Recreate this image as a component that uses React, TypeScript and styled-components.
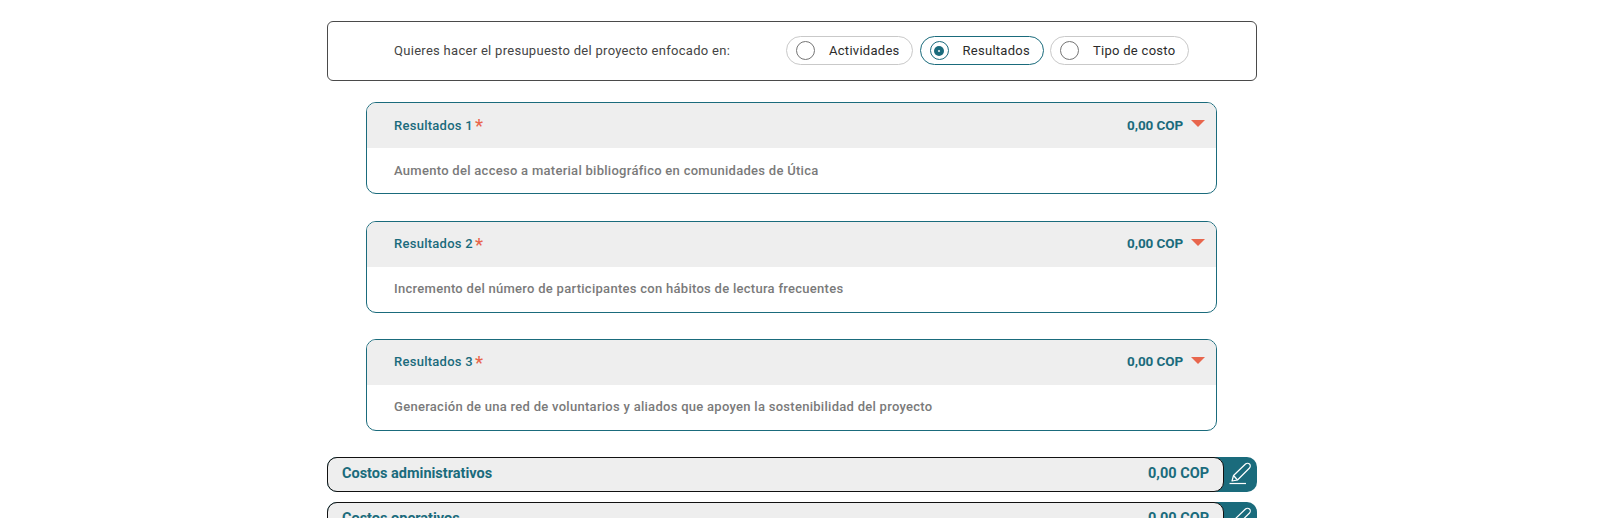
import React from "react";
import styled, { createGlobalStyle } from "styled-components";

const teal = "#1a6b7c";

const GlobalStyle = createGlobalStyle`
  html, body {
    margin: 0;
    padding: 0;
    height: 100%;
    overflow: hidden;
    background: #ffffff;
    font-family: Roboto, "Liberation Sans", sans-serif;
  }
`;

const Page = styled.div`
  width: 930px;
  margin-left: 327px;
  padding-top: 21px;
`;

const FocusBox = styled.div`
  box-sizing: border-box;
  height: 60px;
  border: 1px solid #4a4a4a;
  border-radius: 6px;
  display: flex;
  align-items: center;
  padding: 0 0 1px 66px;
  margin-bottom: 21.3px;
`;

const FocusLabel = styled.span`
  width: 392px;
  font-size: 13px;
  letter-spacing: 0.29px;
  color: #444444;
`;

const RadioGroup = styled.div`
  display: flex;
  gap: 6.5px;
`;

const RadioPill = styled.label<{ $active?: boolean; $width: number }>`
  box-sizing: border-box;
  width: ${(p) => p.$width}px;
  height: 29px;
  border: 1px solid ${(p) => (p.$active ? teal : "#c9c9c9")};
  border-radius: 15px;
  display: flex;
  align-items: center;
  padding-left: 9px;
  gap: 14px;
  font-size: 13px;
  letter-spacing: 0.28px;
  color: #2b2b2b;
`;

const RadioCircle = styled.span<{ $active?: boolean }>`
  box-sizing: border-box;
  width: 19px;
  height: 19px;
  border-radius: 50%;
  border: ${(p) => (p.$active ? `1.5px solid ${teal}` : "1px solid #757575")};
  display: flex;
  align-items: center;
  justify-content: center;
  &::after {
    content: "";
    display: ${(p) => (p.$active ? "block" : "none")};
    width: 10px;
    height: 10px;
    border-radius: 50%;
    background: radial-gradient(circle, #b9d3d9 0 0.8px, ${teal} 1.6px);
  }
`;

const ResultList = styled.div`
  display: flex;
  flex-direction: column;
  gap: 26.3px;
  margin: 0 40px 26px 39px;
`;

const ResultCard = styled.section`
  box-sizing: border-box;
  height: 92px;
  border: 1px solid ${teal};
  border-radius: 10px;
  overflow: hidden;
`;

const ResultHeader = styled.header`
  box-sizing: border-box;
  height: 45px;
  background: #eeeeee;
  display: flex;
  align-items: center;
  justify-content: space-between;
  padding: 0 11px 1px 27px;
  color: ${teal};
  font-size: 13px;
  font-weight: 500;
  letter-spacing: 0.27px;
`;

const ResultTitle = styled.span`
  display: flex;
  align-items: center;
  gap: 2px;
`;

const Required = styled.span`
  color: #e8664d;
  font-size: 18px;
  font-weight: 500;
  line-height: 1;
  margin-top: 2px;
`;

const Amount = styled.span`
  display: flex;
  align-items: center;
  gap: 8px;
  font-size: 13.5px;
  line-height: 15px;
  font-weight: 700;
  letter-spacing: -0.1px;
`;

const Caret = styled.span`
  width: 0;
  height: 0;
  border-left: 7px solid transparent;
  border-right: 7px solid transparent;
  border-top: 7px solid #e8664d;
  margin-top: -3px;
`;

const ResultBody = styled.p`
  margin: 0;
  padding: 14.5px 27px 0;
  font-size: 13px;
  font-weight: 500;
  line-height: 16px;
  letter-spacing: 0.28px;
  color: #7a7a7a;
`;

const CostList = styled.div`
  display: flex;
  flex-direction: column;
  gap: 10px;
`;

const CostRow = styled.div`
  display: flex;
  height: 35px;
  background: ${teal};
  border-radius: 10px;
`;

const CostBar = styled.div`
  box-sizing: border-box;
  flex: 1;
  display: flex;
  align-items: center;
  justify-content: space-between;
  padding: 0 14px 1px 14px;
  background: #eeeeee;
  border: 1px solid #111111;
  border-radius: 10px;
  color: ${teal};
  font-size: 14.5px;
  font-weight: 700;
`;

const EditButton = styled.button`
  width: 33px;
  padding: 0;
  border: 0;
  background: transparent;
  display: flex;
  align-items: center;
  justify-content: center;
`;

const PencilIcon = () => (
  <svg width="24" height="24" viewBox="0 0 24 24" fill="none" stroke="#ffffff" strokeWidth="1.2">
    <path
      d="M3 19 L4.5 13.5 L16.5 2 C17.5 1 19.5 1 20.5 2 C21.5 3 21.5 5 20.5 6 L8.5 18 Z"
      strokeLinejoin="round"
    />
    <path d="M4.5 13.5 L8.5 18" />
    <path d="M0.5 21.5 H17" />
  </svg>
);

const options = [
  { label: "Actividades", width: 127 },
  { label: "Resultados", width: 124, active: true },
  { label: "Tipo de costo", width: 139 },
];

const results = [
  "Aumento del acceso a material bibliográfico en comunidades de Útica",
  "Incremento del número de participantes con hábitos de lectura frecuentes",
  "Generación de una red de voluntarios y aliados que apoyen la sostenibilidad del proyecto",
];

const costs = ["Costos administrativos", "Costos operativos"];

export default function App() {
  return (
    <Page>
      <GlobalStyle />
      <FocusBox>
        <FocusLabel>Quieres hacer el presupuesto del proyecto enfocado en:</FocusLabel>
        <RadioGroup>
          {options.map((o) => (
            <RadioPill key={o.label} $active={o.active} $width={o.width}>
              <RadioCircle $active={o.active} />
              {o.label}
            </RadioPill>
          ))}
        </RadioGroup>
      </FocusBox>
      <ResultList>
        {results.map((text, i) => (
          <ResultCard key={text}>
            <ResultHeader>
              <ResultTitle>
                Resultados {i + 1}
                <Required>*</Required>
              </ResultTitle>
              <Amount>
                0,00 COP
                <Caret />
              </Amount>
            </ResultHeader>
            <ResultBody>{text}</ResultBody>
          </ResultCard>
        ))}
      </ResultList>
      <CostList>
        {costs.map((c) => (
          <CostRow key={c}>
            <CostBar>
              <span>{c}</span>
              <span>0,00 COP</span>
            </CostBar>
            <EditButton>
              <PencilIcon />
            </EditButton>
          </CostRow>
        ))}
      </CostList>
    </Page>
  );
}
